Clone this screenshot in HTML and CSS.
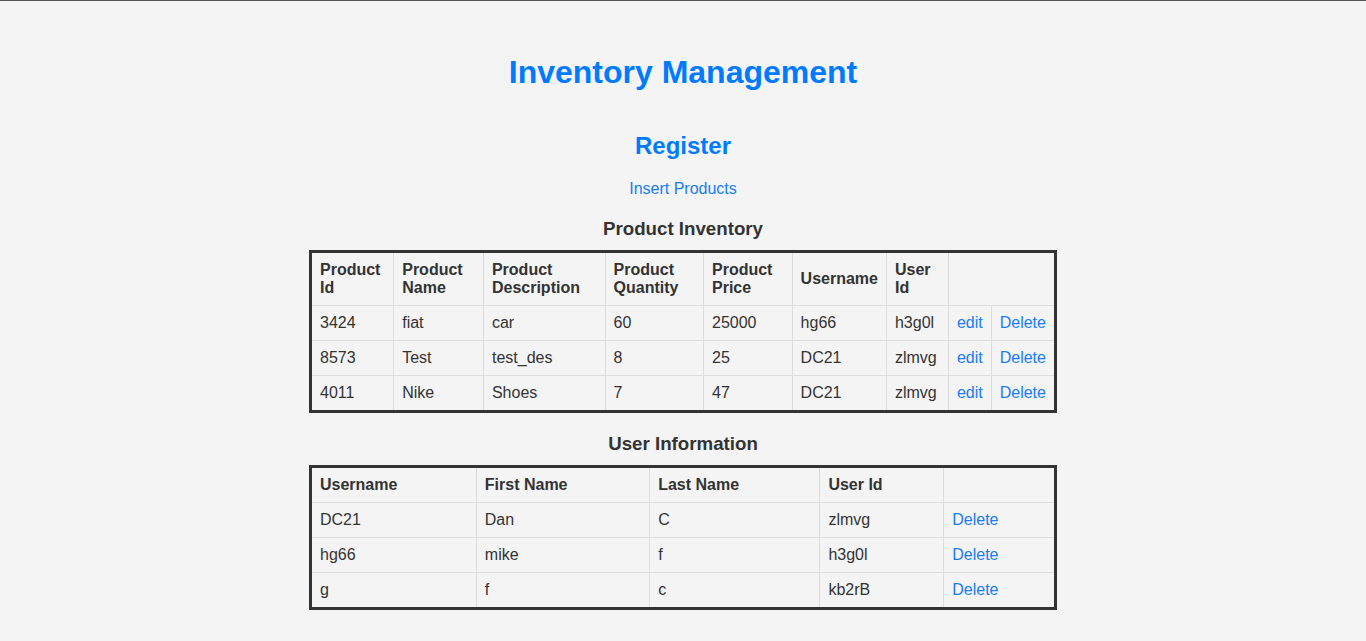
FILE: index.html
```html
<!DOCTYPE html>
<html lang="en">
<head>
<meta charset="utf-8">
<title>Inventory Management</title>
<link rel="stylesheet" href="styles.css">
</head>
<body>
<main class="page">
  <h1 class="title">Inventory Management</h1>
  <h2 class="subtitle"><a href="#" class="plain-link">Register</a></h2>
  <p class="nav"><a href="#" class="link">Insert Products</a></p>

  <h3 class="section-title">Product Inventory</h3>
  <table class="data-table">
    <thead>
      <tr>
        <th>Product Id</th>
        <th>Product Name</th>
        <th>Product Description</th>
        <th>Product Quantity</th>
        <th>Product Price</th>
        <th>Username</th>
        <th>User Id</th>
        <th colspan="2"></th>
      </tr>
    </thead>
    <tbody>
      <tr><td>3424</td><td>fiat</td><td>car</td><td>60</td><td>25000</td><td>hg66</td><td>h3g0l</td><td><a href="#" class="link">edit</a></td><td><a href="#" class="link">Delete</a></td></tr>
      <tr><td>8573</td><td>Test</td><td>test_des</td><td>8</td><td>25</td><td>DC21</td><td>zlmvg</td><td><a href="#" class="link">edit</a></td><td><a href="#" class="link">Delete</a></td></tr>
      <tr><td>4011</td><td>Nike</td><td>Shoes</td><td>7</td><td>47</td><td>DC21</td><td>zlmvg</td><td><a href="#" class="link">edit</a></td><td><a href="#" class="link">Delete</a></td></tr>
    </tbody>
  </table>

  <h3 class="section-title">User Information</h3>
  <table class="data-table">
    <thead>
      <tr>
        <th>Username</th>
        <th>First Name</th>
        <th>Last Name</th>
        <th>User Id</th>
        <th></th>
      </tr>
    </thead>
    <tbody>
      <tr><td>DC21</td><td>Dan</td><td>C</td><td>zlmvg</td><td><a href="#" class="link">Delete</a></td></tr>
      <tr><td>hg66</td><td>mike</td><td>f</td><td>h3g0l</td><td><a href="#" class="link">Delete</a></td></tr>
      <tr><td>g</td><td>f</td><td>c</td><td>kb2rB</td><td><a href="#" class="link">Delete</a></td></tr>
    </tbody>
  </table>
</main>
</body>
</html>
```

FILE: styles.css
```css
html, body {
  margin: 0;
  padding: 0;
}

body {
  background: #f4f4f4;
  border-top: 1px solid #555;
  color: #333;
  font-family: "Liberation Sans", Arial, sans-serif;
  font-size: 16px;
}

.page {
  text-align: center;
  padding: 1px 0 20px;
}

.title {
  color: #007bff;
  font-size: 32px;
  font-weight: bold;
  margin: 52px 0 0;
  line-height: 37px;
}

.subtitle {
  font-size: 24px;
  margin: 41px 0 0;
  line-height: 28px;
}

.plain-link {
  color: #007bff;
  text-decoration: none;
}

.nav {
  margin: 20px 0 0;
  line-height: 18px;
}

.link {
  color: #1a7cf5;
  text-decoration: none;
}

.section-title {
  font-size: 18.72px;
  font-weight: bold;
  margin: 20px 0 10px;
  line-height: 22px;
}

.data-table {
  width: 748px;
  margin: 0 auto;
  border-collapse: collapse;
  border: 3px solid #333;
  text-align: left;
}

.data-table th,
.data-table td {
  border: 1px solid #ddd;
  padding: 8px;
  line-height: 18px;
  vertical-align: middle;
}

.data-table th {
  font-weight: bold;
}
```
